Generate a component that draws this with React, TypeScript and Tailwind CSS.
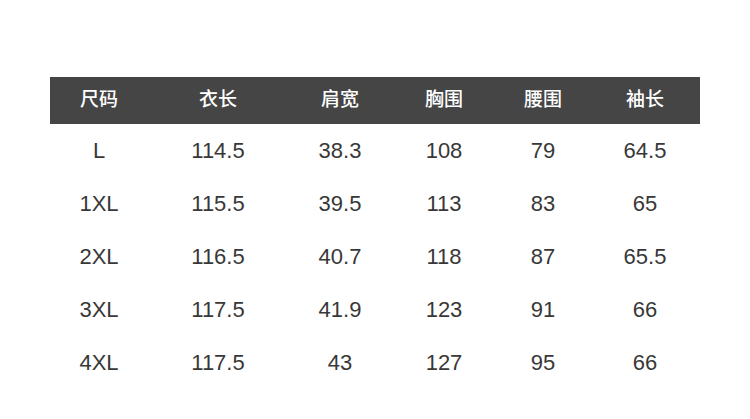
import React from "react";

const headers = ["尺码", "衣长", "肩宽", "胸围", "腰围", "袖长"];
const rows = [
  ["L", "114.5", "38.3", "108", "79", "64.5"],
  ["1XL", "115.5", "39.5", "113", "83", "65"],
  ["2XL", "116.5", "40.7", "118", "87", "65.5"],
  ["3XL", "117.5", "41.9", "123", "91", "66"],
  ["4XL", "117.5", "43", "127", "95", "66"],
];

const cols = "grid grid-cols-[98px_140px_104px_104px_94px_110px]";

export default function App() {
  return (
    <div
      className="w-[750px] h-[419px] bg-white pt-[77px] px-[50px]"
      style={{ fontFamily: '"Liberation Sans", "Noto Sans CJK SC", sans-serif' }}
    >
      <div className={`${cols} h-[47px] bg-[#454545] text-white text-[19px] font-medium`}>
        {headers.map((h) => (
          <div key={h} className="flex items-center justify-center">
            {h}
          </div>
        ))}
      </div>
      {rows.map((r, i) => (
        <div key={i} className={`${cols} h-[53px] text-[#383838] text-[22px]`}>
          {r.map((c, j) => (
            <div key={j} className="flex items-center justify-center">
              {c}
            </div>
          ))}
        </div>
      ))}
    </div>
  );
}
